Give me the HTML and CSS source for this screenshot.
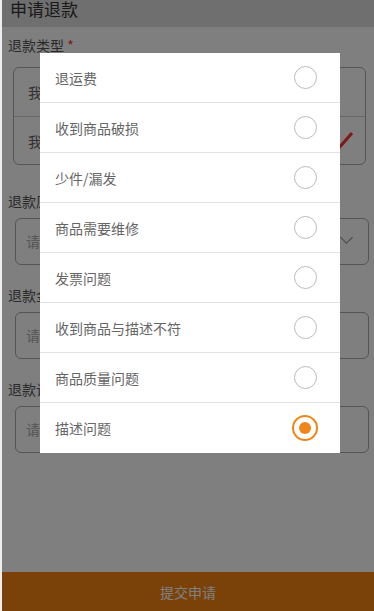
FILE: index.html
```html
<!DOCTYPE html>
<html lang="zh-CN">
<head>
  <meta charset="UTF-8">
  <meta name="viewport" content="width=device-width, initial-scale=1.0">
  <title>申请退款</title>
  <link rel="stylesheet" href="styles.css">
</head>
<body>
  <div class="page">
    <div class="page__header">申请退款</div>

    <div class="field field--first">
      <div class="field__label">退款类型 <span class="field__star">*</span></div>
      <div class="choice-card">
        <div class="choice-card__row">我要退款</div>
        <div class="choice-card__row">我要退货退款
          <svg class="choice-card__check" width="24" height="20" viewBox="0 0 24 20">
            <polyline points="1,8 9,18 23,2" fill="none" stroke="#f33" stroke-width="3"/>
          </svg>
        </div>
      </div>
    </div>

    <div class="field field--after-card">
      <div class="field__label">退款原因</div>
      <div class="field__box">请选择退款原因<span class="field__chevron"></span></div>
    </div>

    <div class="field">
      <div class="field__label">退款金额</div>
      <div class="field__box">请输入退款金额</div>
    </div>

    <div class="field">
      <div class="field__label">退款说明</div>
      <div class="field__box">请输入退款说明</div>
    </div>

    <button class="btn submit">提交申请</button>

    <div class="mask">
      <ul class="reason-list">
        <li class="reason-list__item">退运费<span class="radio"></span></li>
        <li class="reason-list__item">收到商品破损<span class="radio"></span></li>
        <li class="reason-list__item">少件/漏发<span class="radio"></span></li>
        <li class="reason-list__item">商品需要维修<span class="radio"></span></li>
        <li class="reason-list__item">发票问题<span class="radio"></span></li>
        <li class="reason-list__item">收到商品与描述不符<span class="radio"></span></li>
        <li class="reason-list__item">商品质量问题<span class="radio"></span></li>
        <li class="reason-list__item">描述问题<span class="radio radio--checked"></span></li>
      </ul>
    </div>
  </div>
</body>
</html>
```

FILE: styles.css
```css
* {
  box-sizing: border-box;
  font-family: "Noto Sans CJK SC", "Noto Sans", sans-serif;
}
html, body {
  margin: 0;
  height: 100%;
  overflow: hidden;
}
body {
  background: #eee;
  padding-left: 2px;
}
button {
  border: 0;
  outline: none;
}
.page {
  position: relative;
  height: 611px;
  background: #fff;
  display: flex;
  flex-direction: column;
  overflow: hidden;
}
.page__header {
  height: 27px;
  background: #dedede;
  color: #333;
  font-size: 17px;
  line-height: 18px;
  padding-left: 8px;
}
.field {
  padding-top: 20px;
}
.field--first {
  padding-top: 8px;
}
.field--after-card {
  padding-top: 26px;
}
.field__label {
  height: 20px;
  line-height: 20px;
  font-size: 14px;
  color: #555;
  padding-left: 6px;
  margin-bottom: 7px;
}
.field--first .field__label {
  margin-bottom: 12px;
}
.field__star {
  color: #e33;
}
.choice-card {
  margin: 0 8px 0 11px;
  border: 1px solid #aaa;
  border-radius: 6px;
}
.choice-card__row {
  position: relative;
  height: 48px;
  line-height: 48px;
  padding-left: 14px;
  font-size: 14px;
  color: #666;
}
.choice-card__row + .choice-card__row {
  border-top: 1px solid #ccc;
}
.choice-card__check {
  position: absolute;
  right: 12px;
  top: 14px;
}
.field__box {
  position: relative;
  margin: 0 5px 0 13px;
  height: 47px;
  line-height: 45px;
  border: 1px solid #aaa;
  border-radius: 6px;
  padding-left: 10px;
  font-size: 14px;
  color: #aaa;
}
.field__chevron {
  position: absolute;
  right: 17px;
  top: 14px;
  width: 9px;
  height: 9px;
  border-right: 1.5px solid #888;
  border-bottom: 1.5px solid #888;
  transform: rotate(45deg);
}
.submit {
  margin-top: auto;
  height: 39px;
  background: #f48412;
  color: #fff;
  font-size: 14px;
}
.mask {
  position: absolute;
  left: 0;
  top: 0;
  right: 0;
  bottom: 0;
  background: rgba(0, 0, 0, 0.5);
}
.reason-list {
  list-style: none;
  margin: 53px 0 0 38px;
  padding: 0;
  width: 300px;
  background: #fff;
}
.reason-list__item {
  height: 50px;
  display: flex;
  align-items: center;
  justify-content: space-between;
  padding: 0 23px 0 15px;
  font-size: 14px;
  color: #666;
  border-bottom: 1px solid #e2e2e2;
}
.reason-list__item:last-child {
  border-bottom: 0;
}
.radio {
  width: 23px;
  height: 23px;
  border: 1px solid #bbb;
  border-radius: 50%;
}
.radio--checked {
  width: 26px;
  height: 26px;
  margin-right: -1px;
  border: 2px solid #f08519;
  display: flex;
  align-items: center;
  justify-content: center;
}
.radio--checked::after {
  content: "";
  width: 12px;
  height: 12px;
  border-radius: 50%;
  background: #f08519;
}
```
